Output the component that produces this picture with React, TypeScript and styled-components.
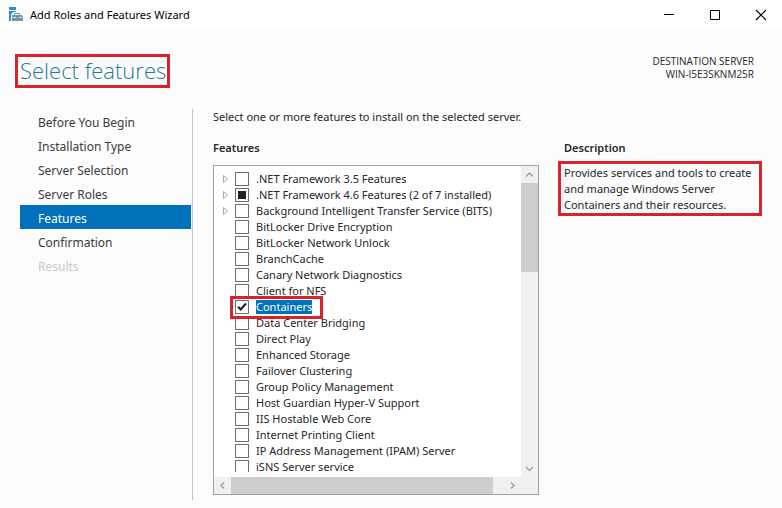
import React, { useEffect, useRef, useState } from "react";
import styled, { createGlobalStyle } from "styled-components";

const GlobalStyle = createGlobalStyle`
  *, *::before, *::after { box-sizing: border-box; }
  html, body, #root { height: 100%; }
  body {
    margin: 0;
    background: #fcfcfc;
    color: #262626;
    font-family: "Noto Sans", "Open Sans", sans-serif;
    font-size: 11px;
    line-height: 16px;
  }
  button { font: inherit; color: inherit; border: 0; padding: 0; background: none; }
`;

const Window = styled.div`
  display: flex;
  flex-direction: column;
  min-height: 100%;
`;

const TitleBar = styled.header`
  display: flex;
  align-items: center;
  height: 30px;
  padding-left: 8px;
  background: #fff;
  color: #000;
`;

const AppTitle = styled.span`
  flex: 1;
  margin-left: 6px;
`;

const WindowButtons = styled.div`
  display: flex;
  gap: 4px;
`;

const WindowButton = styled.button`
  display: flex;
  align-items: center;
  justify-content: center;
  width: 42px;
  height: 28px;
`;

const PageHeader = styled.div`
  display: flex;
  justify-content: space-between;
  align-items: flex-start;
  padding: 24px 28px 0 15px;
`;

const PageTitle = styled.h1`
  height: 34px;
  margin: 0;
  padding: 0 1px 0 2px;
  border: 3px solid #d9222a;
  color: #2b7795;
  font-family: "Open Sans", "Noto Sans", sans-serif;
  font-size: 22px;
  font-weight: 300;
  line-height: 27px;
`;

const Destination = styled.div`
  font-family: "Open Sans", "Noto Sans", sans-serif;
  font-size: 10px;
  line-height: 13px;
  padding-top: 1px;
  text-align: right;
`;

const Main = styled.div`
  display: flex;
  flex: 1;
  padding: 21px 20px 8px;
`;

const Steps = styled.nav`
  display: flex;
  flex-direction: column;
  flex: none;
  width: 173px;
  padding-right: 1px;
  border-right: 1px solid #c4c4c4;
`;

const Step = styled.a<{ $active?: boolean; $disabled?: boolean }>`
  height: 24px;
  padding-left: 18px;
  font-size: 12px;
  line-height: 28px;
  text-decoration: none;
  color: ${(p) => (p.$active ? "#fff" : p.$disabled ? "#c8c8c8" : "#3b3b3b")};
  background: ${(p) => (p.$active ? "#0072bc" : "transparent")};
`;

const Content = styled.main`
  flex: 1;
  min-width: 0;
  padding-left: 20px;
`;

const Intro = styled.p`
  margin: 0 0 15px;
`;

const Columns = styled.div`
  display: grid;
  grid-template-columns: minmax(0, 326fr) minmax(0, 204fr);
  column-gap: 19px;
`;

const Heading = styled.h2<{ $indent?: boolean }>`
  margin: 0;
  padding-left: ${(p) => (p.$indent ? "6px" : "0")};
  font-size: 11px;
  font-weight: 600;
  line-height: 16px;
`;

const ListBox = styled.div`
  display: grid;
  grid-template-columns: minmax(0, 1fr) 17px;
  margin-top: 9px;
  border: 1px solid #a0a0a0;
  background: #fff;
`;

const ListView = styled.div`
  height: 306px;
  margin-bottom: 5px;
  padding: 5px 0 0 8px;
  overflow: hidden;
`;

const List = styled.ul`
  margin: 0;
  padding: 0;
  list-style: none;
`;

const Row = styled.li`
  position: relative;
  display: grid;
  grid-template-columns: 13px 21px auto;
  align-items: center;
  width: fit-content;
  height: 16px;
`;

const Expander = styled.button`
  grid-column: 1;
  display: flex;
  width: 8px;
  height: 10px;
`;

const Check = styled.input`
  grid-column: 2;
  appearance: none;
  width: 14px;
  height: 14px;
  margin: 0;
  border: 1px solid #6e6e6e;
  background: #fff;

  &:indeterminate {
    background: #212121;
    box-shadow: inset 0 0 0 2px #fff;
  }
  &:checked {
    background: #fff
      url("data:image/svg+xml,%3Csvg xmlns='http://www.w3.org/2000/svg' viewBox='0 0 12 12'%3E%3Cpath d='M2 5.8 4.7 8.500 10 2.500' fill='none' stroke='%23202020' stroke-width='2.1'/%3E%3C/svg%3E")
      center / 12px 12px no-repeat;
  }
`;

const CheckLabel = styled.label<{ $selected?: boolean }>`
  grid-column: 3;
  height: 14px;
  line-height: 14px;
  white-space: nowrap;
  color: ${(p) => (p.$selected ? "#fff" : "inherit")};
  background: ${(p) => (p.$selected ? "#0072bc" : "transparent")};
`;

const Highlight = styled.span`
  position: absolute;
  z-index: 1;
  inset: -3px -11px -4px 8px;
  border: 3px solid #d9222a;
  pointer-events: none;
`;

const VerticalBar = styled.div`
  display: flex;
  flex-direction: column;
  background: #f0f0f0;
`;

const HorizontalBar = styled.div`
  display: flex;
  grid-column: 1 / -1;
  height: 17px;
  padding-right: 17px;
  background: #f0f0f0;
`;

const ArrowButton = styled.button`
  display: flex;
  flex: none;
  align-items: center;
  justify-content: center;
  width: 17px;
  height: 17px;
`;

const Track = styled.div<{ $vertical?: boolean }>`
  display: flex;
  flex: 1;
  flex-direction: ${(p) => (p.$vertical ? "column" : "row")};
`;

const Thumb = styled.div<{ $share: number }>`
  flex: 0 0 ${(p) => p.$share}%;
  background: #cdcdcd;
`;

const Description = styled.p`
  margin: 5px 0 0;
  padding: 1px 0 0 3px;
  border: 3px solid #d9222a;
`;

const steps = [
  "Before You Begin",
  "Installation Type",
  "Server Selection",
  "Server Roles",
  "Features",
  "Confirmation",
  "Results",
];

type Feature = { name: string; expandable?: boolean; partial?: boolean };

const features: Feature[] = [
  { name: ".NET Framework 3.5 Features", expandable: true },
  { name: ".NET Framework 4.6 Features (2 of 7 installed)", expandable: true, partial: true },
  { name: "Background Intelligent Transfer Service (BITS)", expandable: true },
  { name: "BitLocker Drive Encryption" },
  { name: "BitLocker Network Unlock" },
  { name: "BranchCache" },
  { name: "Canary Network Diagnostics" },
  { name: "Client for NFS" },
  { name: "Containers" },
  { name: "Data Center Bridging" },
  { name: "Direct Play" },
  { name: "Enhanced Storage" },
  { name: "Failover Clustering" },
  { name: "Group Policy Management" },
  { name: "Host Guardian Hyper-V Support" },
  { name: "IIS Hostable Web Core" },
  { name: "Internet Printing Client" },
  { name: "IP Address Management (IPAM) Server" },
  { name: "iSNS Server service" },
];

function ServerIcon() {
  return (
    <svg width="16" height="16" viewBox="0 0 16 16" aria-hidden="true">
      <path d="M1 0h7v3H1zM1 4h7v1H5L3 8v6H1z" fill="#2b8fd0" />
      <path d="M6.500 8V6.500h5V8" fill="none" stroke="#7893a3" />
      <path d="M4 8h10l1 2v4H4z" fill="#7893a3" />
      <path d="M5 10.500h3M11 10.500h3" stroke="#dfe7ec" />
    </svg>
  );
}

const chevrons = {
  up: "M1 6.500 4.500 3 8 6.500",
  down: "M1 3 4.500 6.500 8 3",
  left: "M6 1.500 3 4.500 6 7.500",
  right: "M3 1.500 6 4.500 3 7.500",
};

function ScrollArrow({ direction }: { direction: keyof typeof chevrons }) {
  return (
    <ArrowButton type="button" aria-label={`Scroll ${direction}`}>
      <svg width="9" height="9" viewBox="0 0 9 9">
        <path d={chevrons[direction]} fill="none" stroke="#a0a0a0" strokeWidth="1.500" />
      </svg>
    </ArrowButton>
  );
}

function FeatureRow({
  feature,
  checked,
  onChange,
}: {
  feature: Feature;
  checked: boolean;
  onChange: () => void;
}) {
  const box = useRef<HTMLInputElement>(null);
  const id = `feature-${feature.name.replace(/\W+/g, "-")}`;
  const selected = feature.name === "Containers";
  useEffect(() => {
    if (box.current) box.current.indeterminate = !!feature.partial;
  }, [feature.partial]);
  return (
    <Row>
      {feature.expandable && (
        <Expander type="button" aria-label={`Expand ${feature.name}`}>
          <svg width="8" height="10" viewBox="0 0 8 10">
            <path d="M1.500 1.500v7L5.500 5z" fill="#fff" stroke="#a6a6a6" />
          </svg>
        </Expander>
      )}
      <Check ref={box} id={id} type="checkbox" checked={checked} onChange={onChange} />
      <CheckLabel htmlFor={id} $selected={selected}>
        {feature.name}
      </CheckLabel>
      {selected && <Highlight />}
    </Row>
  );
}

export default function App() {
  const [checked, setChecked] = useState<string[]>(["Containers"]);
  const toggle = (name: string) =>
    setChecked((names) =>
      names.includes(name) ? names.filter((n) => n !== name) : [...names, name],
    );

  return (
    <Window>
      <GlobalStyle />
      <TitleBar>
        <ServerIcon />
        <AppTitle>Add Roles and Features Wizard</AppTitle>
        <WindowButtons>
          <WindowButton type="button" aria-label="Minimize">
            <svg width="12" height="12" viewBox="0 0 12 12">
              <path d="M1 5.500h10" stroke="#000" />
            </svg>
          </WindowButton>
          <WindowButton type="button" aria-label="Maximize">
            <svg width="12" height="12" viewBox="0 0 12 12">
              <path d="M1.500 1.500h9v9h-9z" fill="none" stroke="#000" />
            </svg>
          </WindowButton>
          <WindowButton type="button" aria-label="Close">
            <svg width="12" height="12" viewBox="0 0 12 12">
              <path d="M1 1l10 10M11 1L1 11" stroke="#000" strokeWidth="1.200" />
            </svg>
          </WindowButton>
        </WindowButtons>
      </TitleBar>
      <PageHeader>
        <PageTitle>Select features</PageTitle>
        <Destination>
          DESTINATION SERVER
          <br />
          WIN-I5E3SKNM25R
        </Destination>
      </PageHeader>
      <Main>
        <Steps aria-label="Wizard steps">
          {steps.map((step) => (
            <Step
              key={step}
              href="#"
              $active={step === "Features"}
              $disabled={step === "Results"}
              aria-current={step === "Features" ? "step" : undefined}
            >
              {step}
            </Step>
          ))}
        </Steps>
        <Content>
          <Intro>Select one or more features to install on the selected server.</Intro>
          <Columns>
            <section>
              <Heading>Features</Heading>
              <ListBox>
                <ListView>
                  <List>
                    {features.map((feature) => (
                      <FeatureRow
                        key={feature.name}
                        feature={feature}
                        checked={checked.includes(feature.name)}
                        onChange={() => toggle(feature.name)}
                      />
                    ))}
                  </List>
                </ListView>
                <VerticalBar>
                  <ScrollArrow direction="up" />
                  <Track $vertical>
                    <Thumb $share={32} />
                  </Track>
                  <ScrollArrow direction="down" />
                </VerticalBar>
                <HorizontalBar>
                  <ScrollArrow direction="left" />
                  <Track>
                    <Thumb $share={96} />
                  </Track>
                  <ScrollArrow direction="right" />
                </HorizontalBar>
              </ListBox>
            </section>
            <section>
              <Heading $indent>Description</Heading>
              <Description>
                Provides services and tools to create and manage Windows Server Containers and their
                resources.
              </Description>
            </section>
          </Columns>
        </Content>
      </Main>
    </Window>
  );
}
